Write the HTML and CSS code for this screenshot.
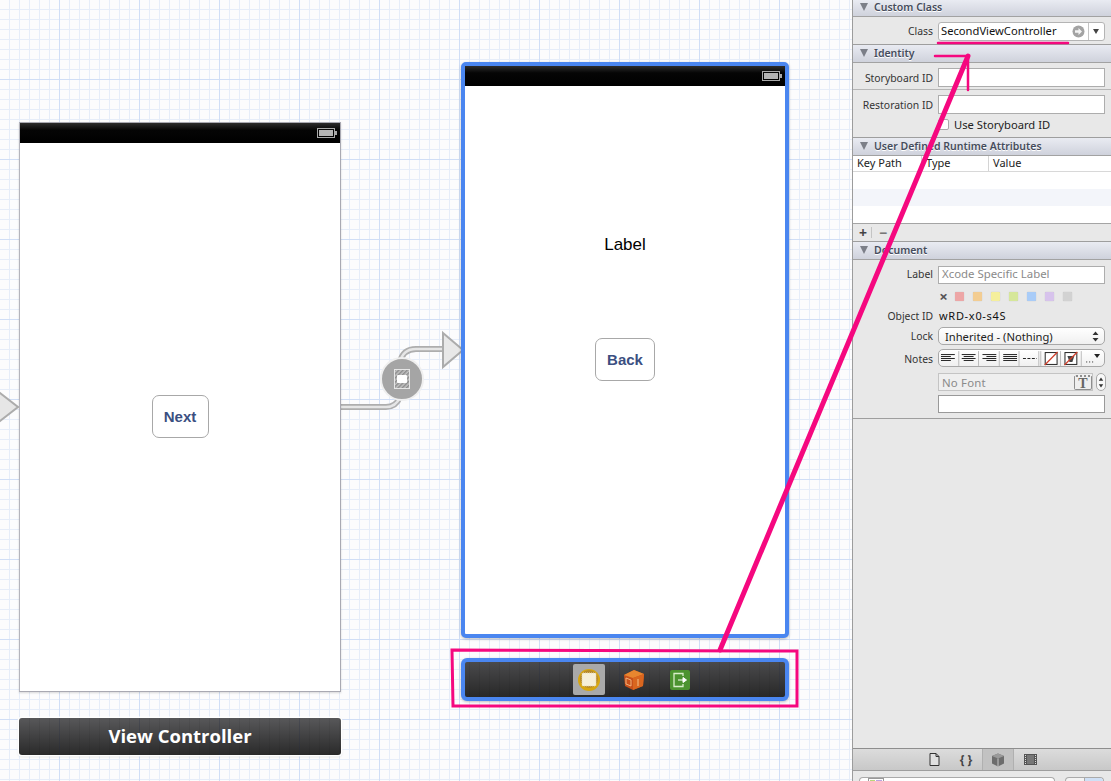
FILE: index.html
```html
<!DOCTYPE html>
<html lang="en">
<head>
    <meta charset="UTF-8">
    <meta name="viewport" content="width=device-width, initial-scale=1.0">
    <title>Storyboard</title>
    <link rel="stylesheet" href="styles.css">
</head>
<body>
    <div class="window">
        <div class="canvas">
            <!-- entry arrow and segue sit on the canvas under the scenes -->
            <svg class="segue" width="852" height="781" viewBox="0 0 852 781">
                <defs>
                    <pattern id="hatch" width="3" height="3" patternUnits="userSpaceOnUse" patternTransform="rotate(45)">
                        <rect width="3" height="3" fill="#c4c4c4"/>
                        <rect width="1.500" height="3" fill="#8c8c8c"/>
                    </pattern>
                </defs>
                <path d="M-4 390 L18 407 L-4 424 Z" fill="#e6e6e6" stroke="#acacac" stroke-width="2"/>
                <path d="M340 407 H386 Q396 407 400 397 L400 362 Q403 349 416 349 H444" fill="none" stroke="#aeaeae" stroke-width="6"/>
                <path d="M340 407 H386 Q396 407 400 397 L400 362 Q403 349 416 349 H444" fill="none" stroke="#e6e6e6" stroke-width="2.500"/>
                <path d="M443 333 L463 350 L443 367 Z" fill="#e8e8e8" stroke="#acacac" stroke-width="2"/>
                <circle cx="402" cy="379" r="21" fill="#a5a5a5" stroke="#efefef" stroke-width="2"/>
                <rect x="394.500" y="369.500" width="15" height="19" fill="url(#hatch)" stroke="#e6e6e6"/>
                <rect x="397" y="375" width="10" height="8" rx="1" fill="#fff"/>
            </svg>

            <div class="scene scene-first">
                <div class="status-bar">
                    <span class="battery"><span class="battery-fill"></span></span>
                </div>
                <div class="scene-view">
                    <button class="ios-button next-button">Next</button>
                </div>
            </div>
            <div class="scene-title">View Controller</div>

            <div class="scene scene-second">
                <div class="status-bar">
                    <span class="battery"><span class="battery-fill"></span></span>
                </div>
                <div class="scene-view">
                    <div class="ios-label">Label</div>
                    <button class="ios-button back-button">Back</button>
                </div>
            </div>
            <div class="scene-dock">
                <span class="dock-tile">
                    <svg width="24" height="24" viewBox="0 0 24 24">
                        <circle cx="12" cy="12" r="11" fill="#d8a60f"/>
                        <circle cx="12" cy="11" r="9" fill="#b78a2c"/>
                        <rect x="5" y="5" width="14" height="13" rx="1" fill="#f6efd8" stroke="#e6d8ac" stroke-dasharray="1 1"/>
                    </svg>
                </span>
                <svg class="dock-cube" width="22" height="22" viewBox="0 0 22 22">
                    <path d="M11 1 L21 5 L20 17 L10 21 L2 17 L1 6 Z" fill="#c8501a"/>
                    <path d="M1 6 L10 9 L21 5 L11 1 Z" fill="#e8862f"/>
                    <path d="M10 9 L10 21 L20 17 L21 5 Z" fill="#d9661f"/>
                    <path d="M3 9 L8 11 L8 17 L3 15 Z" fill="none" stroke="#f0b27a"/>
                    <path d="M15 10 V17" stroke="#f3c08a"/>
                </svg>
                <svg class="dock-exit" width="20" height="20" viewBox="0 0 20 20">
                    <rect width="20" height="20" rx="2" fill="#4c9330"/>
                    <path d="M13 6 V3.500 H4 V16.500 H13 V14" fill="none" stroke="#d8edc9" stroke-width="1.300"/>
                    <path d="M8 10 H14 M13 7.500 L16.500 10 L13 12.500 Z" fill="#fff" stroke="#fff"/>
                </svg>
            </div>
        </div>

        <aside class="inspector">
            <div class="section-head">Custom Class</div>
            <div class="section-body class-body">
                <div class="row">
                    <label class="row-label">Class</label>
                    <div class="combo">
                        <span class="combo-text">SecondViewController</span>
                        <span class="combo-go">
                            <svg width="13" height="13" viewBox="0 0 13 13">
                                <circle cx="6.500" cy="6.500" r="6" fill="#a3a3a3"/>
                                <path d="M3 5.300 H6.500 V3 L10 6.500 L6.500 10 V7.700 H3 Z" fill="#f4f4f4"/>
                            </svg>
                        </span>
                        <span class="combo-arrow"></span>
                    </div>
                </div>
            </div>

            <div class="section-head">Identity</div>
            <div class="section-body">
                <div class="row storyboard-row">
                    <label class="row-label">Storyboard ID</label>
                    <div class="field"></div>
                </div>
                <div class="row restoration-row">
                    <label class="row-label">Restoration ID</label>
                    <div class="field"></div>
                </div>
                <div class="row check-row">
                    <span class="checkbox"></span>
                    <span>Use Storyboard ID</span>
                </div>
            </div>

            <div class="section-head">User Defined Runtime Attributes</div>
            <div class="attr-table">
                <div class="attr-head">
                    <span class="attr-col key-col">Key Path</span>
                    <span class="attr-col type-col">Type</span>
                    <span class="attr-col value-col">Value</span>
                </div>
                <div class="attr-row"></div>
                <div class="attr-row attr-row-alt"></div>
                <div class="attr-row"></div>
            </div>
            <div class="attr-foot">
                <span class="plus">+</span>
                <span class="foot-sep"></span>
                <span class="minus">&minus;</span>
            </div>

            <div class="section-head">Document</div>
            <div class="section-body doc-body">
                <div class="row doc-label-row">
                    <label class="row-label">Label</label>
                    <div class="field field-placeholder">Xcode Specific Label</div>
                </div>
                <div class="swatches">
                    <span class="swatch-x">&times;</span>
                    <span class="swatch swatch-red"></span>
                    <span class="swatch swatch-orange"></span>
                    <span class="swatch swatch-yellow"></span>
                    <span class="swatch swatch-green"></span>
                    <span class="swatch swatch-blue"></span>
                    <span class="swatch swatch-purple"></span>
                    <span class="swatch swatch-gray"></span>
                </div>
                <div class="row object-row">
                    <label class="row-label">Object ID</label>
                    <span class="object-id">wRD-x0-s4S</span>
                </div>
                <div class="row lock-row">
                    <label class="row-label">Lock</label>
                    <div class="popup">
                        <span>Inherited - (Nothing)</span>
                        <svg width="7" height="11" viewBox="0 0 7 11">
                            <path d="M3.500 0.500 L6.500 4 H0.500 Z M3.500 10.500 L6.500 7 H0.500 Z" fill="#333"/>
                        </svg>
                    </div>
                </div>
                <div class="row notes-row">
                    <label class="row-label">Notes</label>
                    <div class="notes-bar">
                        <svg width="167" height="17" viewBox="0 0 167 17">
                            <path d="M2 4.500 H16 M2 6.500 H12 M2 8.500 H16 M2 10.500 H12 M23 4.500 H37 M25 6.500 H35 M23 8.500 H37 M25 10.500 H35 M44 4.500 H58 M48 6.500 H58 M44 8.500 H58 M48 10.500 H58 M65 4.500 H79 M65 6.500 H79 M65 8.500 H79 M65 10.500 H79" stroke="#222" fill="none"/>
                            <path d="M20 1 V16 M40 1 V16 M61 1 V16 M81 1 V16 M101 1 V16 M103 1 V16 M123 1 V16 M144 1 V16" stroke="#bbb" fill="none"/>
                            <path d="M85 8.500 H99" stroke="#222" stroke-dasharray="3 1.500"/>
                            <rect x="107.500" y="2.500" width="12" height="12" fill="#fff" stroke="#222"/>
                            <path d="M107 15 L120 2" stroke="#d0402c" stroke-width="1.300"/>
                            <rect x="127.500" y="2.500" width="12" height="12" fill="#fff" stroke="#222"/>
                            <path d="M130 6 H137 L135 12 H132 Z" fill="#444"/>
                            <path d="M127 15 L140 2" stroke="#d0402c" stroke-width="1.300"/>
                            <path d="M149 12 H150 M152 12 H153 M155 12 H156" stroke="#222"/>
                            <path d="M157 4 H163 L160 8 Z" fill="#222"/>
                        </svg>
                    </div>
                </div>
                <div class="font-row">
                    <div class="font-field">
                        <span>No Font</span>
                        <span class="font-t">T</span>
                    </div>
                    <div class="font-stepper">
                        <svg width="9" height="15" viewBox="0 0 9 15">
                            <path d="M4.500 2 L7 5.500 H2 Z M4.500 13 L7 9.500 H2 Z" fill="#333"/>
                        </svg>
                    </div>
                </div>
                <div class="field color-field"></div>
            </div>

            <div class="inspector-fill"></div>

            <div class="library-tabs">
                <span class="tab">
                    <svg width="11" height="13" viewBox="0 0 11 13">
                        <path d="M1 .500 H7 L10 3.500 V12.500 H1 Z" fill="#e0e0e0" stroke="#333"/>
                        <path d="M7 .500 V3.500 H10" fill="none" stroke="#333"/>
                    </svg>
                </span>
                <span class="tab tab-braces">{ }</span>
                <span class="tab tab-active">
                    <svg width="14" height="14" viewBox="0 0 14 14">
                        <path d="M7 .500 L13 3 V10.500 L7 13.500 L1 10.500 V3 Z" fill="#6d6d6d"/>
                        <path d="M1 3 L7 5.500 L13 3 L7 .500 Z" fill="#9a9a9a"/>
                        <path d="M7 5.500 V13.500" stroke="#c9c9c9"/>
                    </svg>
                </span>
                <span class="tab">
                    <svg width="13" height="11" viewBox="0 0 13 11">
                        <rect width="13" height="11" fill="#555"/>
                        <path d="M1.500 1 V10 M11.500 1 V10" stroke="#ddd" stroke-dasharray="1 1"/>
                        <rect x="3" y="1" width="7" height="9" fill="#777"/>
                    </svg>
                </span>
            </div>
            <div class="library-filter">
                <div class="filter-field">
                    <svg width="16" height="4" viewBox="0 0 16 4">
                        <rect x=".500" y=".500" width="15" height="10" fill="#fff" stroke="#999"/>
                        <rect x="2" y="2" width="5" height="6" fill="#b8d67a"/>
                        <rect x="8" y="2" width="6" height="6" fill="#b9a4e0"/>
                    </svg>
                </div>
                <div class="view-toggle">
                    <span class="toggle-part"></span>
                    <span class="toggle-part toggle-on"></span>
                </div>
            </div>
        </aside>

        <!-- annotation drawn on top of the whole window -->
        <svg class="annotation" width="1111" height="781" viewBox="0 0 1111 781">
            <g fill="none" stroke="#f5087f" stroke-linecap="round">
                <path d="M938 43 H1068" stroke-width="2.500"/>
                <path d="M935 56 H968 V90" stroke-width="2.500"/>
                <path d="M720 650 L968 56" stroke-width="5"/>
                <path d="M452 650 L797 651 V706 L453 706 Z" stroke-width="3"/>
            </g>
        </svg>
    </div>
</body>
</html>
```

FILE: styles.css
```css
* {
    box-sizing: border-box;
}
html, body {
    margin: 0;
    height: 100%;
    overflow: hidden;
}
body {
    font-family: "Noto Sans", "DejaVu Sans", sans-serif;
    font-size: 11px;
    color: #222;
}
.window {
    position: relative;
    display: flex;
    width: 1111px;
    height: 781px;
    overflow: hidden;
}

/* canvas */
.canvas {
    position: relative;
    flex: 0 0 852px;
    height: 100%;
    background-color: #fcfcfd;
    background-image:
        linear-gradient(to right, #d0def6 1px, transparent 1px),
        linear-gradient(to bottom, #d0def6 1px, transparent 1px),
        linear-gradient(to right, #e6edf9 1px, transparent 1px),
        linear-gradient(to bottom, #e6edf9 1px, transparent 1px);
    background-size: 80px 80px, 80px 80px, 10px 10px, 10px 10px;
    background-position: 59px 0, 0 79px, 9px 0, 0 9px;
}
.segue {
    position: absolute;
    left: 0;
    top: 0;
}
.scene {
    position: absolute;
    display: flex;
    flex-direction: column;
    background: #fff;
}
.scene-first {
    left: 19px;
    top: 122px;
    width: 322px;
    height: 570px;
    border: 1px solid #a9a9b2;
    border-left-color: #b4b4bc;
    box-shadow: 0 1px 2px rgba(0,0,0,0.15);
}
.scene-second {
    left: 461px;
    top: 62px;
    width: 328px;
    height: 576px;
    border: 4px solid #4a86f0;
    border-radius: 5px;
    box-shadow: 0 1px 3px rgba(0,0,0,0.25);
}
.status-bar {
    display: flex;
    align-items: center;
    justify-content: flex-end;
    flex: 0 0 20px;
    padding-right: 5px;
    background: linear-gradient(to bottom, #2c2c2c, #050505 35%, #000);
}
.battery {
    position: relative;
    display: block;
    width: 18px;
    height: 10px;
    padding: 1px;
    border: 1px solid #a9a9a9;
}
.battery::after {
    content: "";
    position: absolute;
    right: -3px;
    top: 2px;
    width: 2px;
    height: 4px;
    background: #a9a9a9;
}
.battery-fill {
    display: block;
    height: 100%;
    background: #b4b4b4;
}
.scene-view {
    flex: 1;
    display: flex;
    flex-direction: column;
    align-items: center;
}
.ios-button {
    font-family: "Liberation Sans", Arial, sans-serif;
    font-size: 15px;
    font-weight: bold;
    color: #3b4f81;
    background: #fff;
    border: 1px solid #a8a8a8;
    border-radius: 7px;
    padding: 0;
}
.next-button {
    width: 57px;
    height: 43px;
    margin-top: 252px;
}
.ios-label {
    font-family: "Liberation Sans", Arial, sans-serif;
    font-size: 17px;
    color: #000;
    margin-top: 149px;
    line-height: 20px;
}
.back-button {
    width: 60px;
    height: 43px;
    margin-top: 83px;
}
.scene-title {
    position: absolute;
    left: 19px;
    top: 718px;
    width: 322px;
    height: 37px;
    border-radius: 3px;
    background-color: #333;
    background-image:
        linear-gradient(to right, rgba(40,50,80,0.2) 1px, transparent 1px),
        linear-gradient(to right, rgba(0,0,0,0.06) 1px, transparent 1px),
        linear-gradient(to bottom, #58585a, #2a2a2a);
    background-size: 80px 100%, 10px 100%, 100% 100%;
    background-position: 40px 0, 0 0, 0 0;
    box-shadow: 0 0 0 1.5px #fff, 0 1px 3px rgba(0,0,0,0.25);
    color: #fff;
    font-family: "Open Sans", sans-serif;
    font-size: 18.500px;
    font-weight: 700;
    line-height: 36px;
    text-align: center;
}
.scene-dock {
    position: absolute;
    left: 461px;
    top: 658px;
    width: 328px;
    height: 43px;
    display: flex;
    align-items: center;
    padding-left: 108px;
    border: 4px solid #4a86f0;
    border-radius: 6px;
    background-color: #333;
    background-image:
        linear-gradient(to right, rgba(40,50,80,0.2) 1px, transparent 1px),
        linear-gradient(to right, rgba(0,0,0,0.06) 1px, transparent 1px),
        linear-gradient(to bottom, #4a4a4c, #282828);
    background-size: 80px 100%, 10px 100%, 100% 100%;
    background-position: 74px 0, 4px 0, 0 0;
    box-shadow: 0 1px 3px rgba(0,0,0,0.25);
}
.dock-tile {
    display: flex;
    align-items: center;
    justify-content: center;
    width: 32px;
    height: 31px;
    border-radius: 2px;
    background: #a9a9a9;
}
.dock-cube {
    margin-left: 18px;
}
.dock-exit {
    margin-left: 25px;
}

/* inspector */
.inspector {
    flex: 1;
    display: flex;
    flex-direction: column;
    height: 100%;
    background: #e8e8e8;
    border-left: 1px solid #9c9c9c;
}
.section-head {
    flex: 0 0 19px;
    position: relative;
    padding-left: 21px;
    font-size: 10.500px;
    font-weight: 600;
    line-height: 16px;
    color: #454c5c;
    text-shadow: 0 1px 0 #fff;
    background: linear-gradient(to bottom, #e9ebf2, #cfd2dc);
    border-top: 1px solid #9e9e9e;
    border-bottom: 1px solid #a2a2a2;
}
.section-head::before {
    content: "";
    position: absolute;
    left: 7px;
    top: 4px;
    border-left: 4.500px solid transparent;
    border-right: 4.500px solid transparent;
    border-top: 8px solid #7c7f88;
}
.section-head:first-child {
    flex-basis: 17px;
    border-top: 0;
    line-height: 14px;
}
.section-head:first-child::before {
    top: 3px;
}
.row {
    display: flex;
    align-items: center;
    height: 20px;
}
.row-label {
    flex: 0 0 80px;
    font-size: 10.400px;
    text-align: right;
    margin-right: 5px;
    color: #333;
}
.class-body {
    height: 27px;
    padding-top: 4px;
}
.combo {
    display: flex;
    align-items: center;
    width: 167px;
    height: 19px;
    background: #fff;
    border: 1px solid #b4b4b4;
    border-radius: 3px;
}
.combo-text {
    flex: 1;
    padding-left: 2px;
    padding-bottom: 2px;
    font-size: 11.200px;
    color: #111;
}
.combo-go {
    display: flex;
    padding-right: 3px;
}
.combo-arrow {
    position: relative;
    flex: 0 0 16px;
    height: 100%;
    border-left: 1px solid #c4c4c4;
}
.combo-arrow::after {
    content: "";
    position: absolute;
    left: 4px;
    top: 6px;
    border-left: 3.500px solid transparent;
    border-right: 3.500px solid transparent;
    border-top: 5px solid #444;
}
.field {
    width: 167px;
    height: 19px;
    background: #fff;
    border: 1px solid #adadad;
}
.storyboard-row {
    height: 27px;
    padding-top: 3px;
    border-bottom: 1px solid #b6b6b6;
}
.restoration-row {
    margin-top: 4px;
}
.restoration-row .row-label {
    padding-top: 2px;
}
.check-row {
    height: 19px;
    padding-left: 85px;
    gap: 5px;
    margin-top: 1px;
    margin-bottom: 3px;
    font-size: 11.200px;
}
.checkbox {
    width: 11px;
    height: 11px;
    background: #fff;
    border: 1px solid #aaa;
    border-radius: 2px;
}
.attr-table {
    background: #fff;
}
.attr-head {
    display: flex;
    height: 16px;
    border-bottom: 1px solid #d8d8d8;
    line-height: 14px;
}
.attr-col {
    padding-left: 4px;
}
.key-col {
    width: 68px;
}
.type-col {
    width: 67px;
    border-left: 1px solid #d4d4d4;
}
.value-col {
    border-left: 1px solid #d4d4d4;
}
.attr-row {
    height: 17px;
}
.attr-row-alt {
    background: #f3f5fa;
}
.attr-foot {
    display: flex;
    align-items: center;
    height: 18px;
    border-top: 1px solid #a4a4a4;
    padding-left: 6px;
    color: #444;
    font-weight: bold;
    font-size: 14px;
    line-height: 14px;
}
.foot-sep {
    width: 1px;
    height: 11px;
    margin: 0 7px 0 4px;
    background: #c4c4c4;
}
.minus {
    color: #777;
}
.doc-body {
    padding-bottom: 5px;
    border-bottom: 1px solid #9e9e9e;
}
.doc-label-row {
    height: 24px;
    padding-top: 5px;
}
.doc-label-row .row-label {
    padding-bottom: 2px;
}
.doc-label-row .field {
    height: 18px;
}
.field-placeholder {
    padding-left: 3px;
    font-size: 11.400px;
    line-height: 13px;
    color: #8a8a8a;
}
.swatches {
    display: flex;
    align-items: center;
    height: 20px;
    margin-top: 2px;
    padding-left: 86px;
    gap: 9px;
}
.swatch-x {
    width: 9px;
    margin-right: -2px;
    font-size: 15px;
    font-weight: bold;
    color: #555;
    text-align: center;
    line-height: 14px;
}
.swatch {
    width: 9px;
    height: 9px;
    border-radius: 1px;
    box-shadow: 0 0 1px rgba(0,0,0,0.25);
}
.swatch-red { background: #eda6a6; }
.swatch-orange { background: #f3cd92; }
.swatch-yellow { background: #f5ef9c; }
.swatch-green { background: #d6e79a; }
.swatch-blue { background: #a9ccf8; }
.swatch-purple { background: #d7c3ec; }
.swatch-gray { background: #d2d2d2; }
.object-row {
    height: 21px;
    padding-bottom: 2px;
}
.object-id {
    letter-spacing: 0.700px;
    margin-left: 1px;
    color: #111;
}
.lock-row {
    height: 18px;
}
.popup {
    display: flex;
    align-items: center;
    justify-content: space-between;
    width: 167px;
    height: 18px;
    padding: 0 5px 0 6px;
    font-size: 11.200px;
    background: linear-gradient(to bottom, #fff, #f0f0f0);
    border: 1px solid #a8a8a8;
    border-radius: 5px;
}
.notes-row {
    height: 18px;
    margin-top: 4px;
}
.notes-row .row-label {
    padding-top: 2px;
}
.notes-bar {
    display: flex;
    width: 167px;
    height: 18px;
    background: linear-gradient(to bottom, #fff, #f0f0f0);
    border: 1px solid #a8a8a8;
    border-radius: 5px;
    overflow: hidden;
}
.font-row {
    display: flex;
    gap: 3px;
    margin: 6px 0 0 85px;
}
.font-field {
    display: flex;
    align-items: center;
    justify-content: space-between;
    width: 155px;
    height: 18px;
    padding: 0 0 0 3px;
    font-size: 11.400px;
    letter-spacing: 0.200px;
    background: #efefef;
    border: 1px solid #c4c4c4;
    color: #8a8a8a;
}
.font-t {
    width: 18px;
    height: 15px;
    font-family: "Liberation Serif", serif;
    font-size: 14px;
    font-weight: bold;
    line-height: 13px;
    text-align: center;
    color: #666;
    background: #efefef;
    border: 1px solid #8e8e8e;
    border-top: 2px dotted #8e8e8e;
    border-radius: 2px;
}
.font-stepper {
    display: flex;
    align-items: center;
    justify-content: center;
    width: 10px;
    height: 18px;
    background: #f8f8f8;
    border: 1px solid #a8a8a8;
    border-radius: 5px;
}
.color-field {
    margin: 4px 0 0 85px;
    height: 18px;
    border-color: #999;
}
.inspector-fill {
    flex: 1;
}
.library-tabs {
    display: flex;
    align-items: center;
    flex: 0 0 23px;
    padding-left: 65px;
    background: linear-gradient(to bottom, #dcdcdc, #c8c8c8);
    border-top: 1px solid #8e8e8e;
    border-bottom: 1px solid #9e9e9e;
}
.tab {
    display: flex;
    align-items: center;
    justify-content: center;
    width: 32px;
    height: 100%;
}
.tab-braces {
    font-weight: bold;
    font-size: 12px;
    color: #444;
}
.tab-active {
    background: #c2c2c2;
    border-left: 1px solid #b0b0b0;
    border-right: 1px solid #b0b0b0;
}
.library-filter {
    display: flex;
    flex: 0 0 10px;
    gap: 10px;
    padding: 0 6px;
    background: #e8e8e8;
}
.filter-field {
    display: flex;
    width: 196px;
    height: 4px;
    margin-top: 6px;
    padding: 0 0 0 8px;
    background: #fff;
    border: 1px solid #aaa;
    border-bottom: 0;
    border-radius: 5px 5px 0 0;
}
.view-toggle {
    display: flex;
    width: 39px;
    height: 4px;
    margin-top: 6px;
    background: #f4f4f4;
    border: 1px solid #aaa;
    border-bottom: 0;
    border-radius: 4px 4px 0 0;
    overflow: hidden;
}
.toggle-part {
    flex: 1;
}
.toggle-on {
    background: #cfe0f6;
    border-left: 1px solid #aaa;
}
.annotation {
    position: absolute;
    left: 0;
    top: 0;
    pointer-events: none;
}
```
